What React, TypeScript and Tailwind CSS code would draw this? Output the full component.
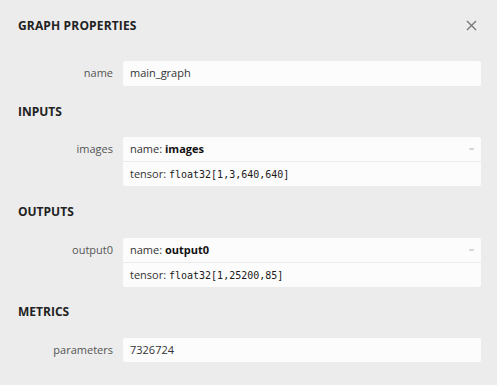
import React from 'react'

const sans = "font-['Open_Sans','Noto_Sans',sans-serif]"
const mono = "font-['DejaVu_Sans_Mono','Liberation_Mono',monospace]"

function Label({ children }: { children: React.ReactNode }) {
  return (
    <div className="w-[123px] shrink-0 pr-[10px] h-[25px] flex items-center justify-end text-[#555]">
      {children}
    </div>
  )
}

function Section({ title }: { title: string }) {
  return <div className="font-bold text-[12px] text-[#222] leading-[16px]">{title}</div>
}

function Tensor({ name, shape }: { name: string; shape: string }) {
  return (
    <div className="flex-1 bg-[#fcfcfc] rounded-[2px]">
      <div className="h-[25px] flex items-center justify-between pl-[7px] pr-[7px] border-b border-[#ececec]">
        <span>
          name: <span className="font-bold text-[#111]">{name}</span>
        </span>
        <span className="w-[5px] h-[2px] bg-[#d4d4d4] rounded-full" />
      </div>
      <div className="h-[24px] flex items-center pl-[7px]">
        <span>tensor:&nbsp;</span>
        <span className={`${mono} text-[10px] font-medium text-[#1a1a1a]`}>{shape}</span>
      </div>
    </div>
  )
}

export default function App() {
  return (
    <div className={`w-[497px] h-[385px] bg-[#ececec] text-[11px] text-[#333] pl-[18px] pr-[16px] pt-[18px] ${sans}`}>
      {/* Header */}
      <div className="flex justify-between items-center">
        <div className="font-bold text-[12px] text-[#222] leading-[16px] tracking-[0.15px]">GRAPH PROPERTIES</div>
        <svg width="11" height="11" viewBox="0 0 11 11" className="mr-[4px] mt-[-1px]">
          <path d="M1 1L10 10M10 1L1 10" stroke="#777" strokeWidth="1.4" />
        </svg>
      </div>

      <div className="flex mt-[27px] ml-[-18px]">
        <Label>name</Label>
        <div className="flex-1 h-[25px] bg-[#fcfcfc] rounded-[2px] flex items-center pl-[7px]">main_graph</div>
      </div>

      <div className="mt-[18px]">
        <Section title="INPUTS" />
      </div>
      <div className="flex mt-[17px] ml-[-18px]">
        <Label>images</Label>
        <Tensor name="images" shape="float32[1,3,640,640]" />
      </div>

      <div className="mt-[18px]">
        <Section title="OUTPUTS" />
      </div>
      <div className="flex mt-[18px] ml-[-18px]">
        <Label>output0</Label>
        <Tensor name="output0" shape="float32[1,25200,85]" />
      </div>

      <div className="mt-[17px]">
        <Section title="METRICS" />
      </div>
      <div className="flex mt-[18px] ml-[-18px]">
        <Label>parameters</Label>
        <div className="flex-1 h-[24px] bg-[#fcfcfc] rounded-[2px] flex items-center pl-[7px]">7326724</div>
      </div>
    </div>
  )
}
